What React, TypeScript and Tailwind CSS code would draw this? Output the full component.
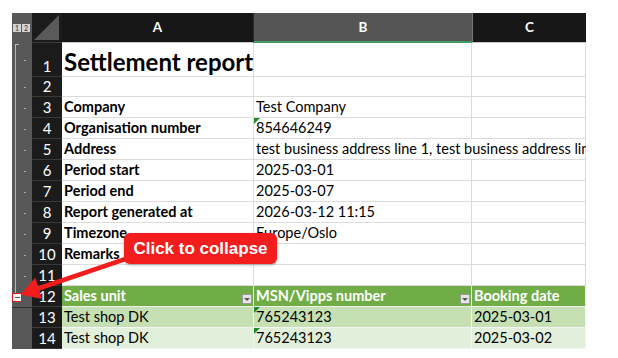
import React from "react";

type Row = {
  n: number;
  h: number;
  a?: string;
  b?: string;
  c?: string;
  kind?: "title" | "label" | "thead" | "odd" | "even" | "empty";
  tri?: boolean;
  overflow?: boolean;
};

const rows: Row[] = [
  { n: 1, h: 34, a: "Settlement report", kind: "title" },
  { n: 2, h: 20, kind: "empty" },
  { n: 3, h: 21, a: "Company", b: "Test Company", kind: "label" },
  { n: 4, h: 21, a: "Organisation number", b: "854646249", kind: "label", tri: true },
  {
    n: 5,
    h: 21,
    a: "Address",
    b: "test business address line 1, test business address line 2",
    kind: "label",
    overflow: true,
  },
  { n: 6, h: 21, a: "Period start", b: "2025-03-01", kind: "label" },
  { n: 7, h: 21, a: "Period end", b: "2025-03-07", kind: "label" },
  { n: 8, h: 21, a: "Report generated at", b: "2026-03-12 11:15", kind: "label" },
  { n: 9, h: 21, a: "Timezone", b: "Europe/Oslo", kind: "label" },
  { n: 10, h: 21, a: "Remarks", kind: "label" },
  { n: 11, h: 21, kind: "empty" },
  { n: 12, h: 21, a: "Sales unit", b: "MSN/Vipps number", c: "Booking date", kind: "thead" },
  { n: 13, h: 21, a: "Test shop DK", b: "765243123", c: "2025-03-01", kind: "odd", tri: true },
  { n: 14, h: 21, a: "Test shop DK", b: "765243123", c: "2025-03-02", kind: "even", tri: true },
];

function Tri() {
  return (
    <div className="absolute left-0 top-0 w-0 h-0 border-t-[6px] border-t-[#1f8a2e] border-r-[6px] border-r-transparent" />
  );
}

function Dropdown() {
  return (
    <div className="absolute right-[1px] bottom-[2px] w-[10px] h-[10px] bg-[#e6e6e6] border border-[#9a9a9a] flex items-center justify-center">
      <div className="w-0 h-0 border-l-[3px] border-l-transparent border-r-[3px] border-r-transparent border-t-[3px] border-t-[#555]" />
    </div>
  );
}

function Gutter({ r }: { r: Row }) {
  if (r.n <= 11) {
    return (
      <div className="w-[20px] bg-[#585858] relative shrink-0">
        {r.n === 1 ? (
          <>
            <div className="absolute left-[3px] top-[1px] bottom-0 w-px bg-[#b5b5b5]" />
            <div className="absolute left-[3px] top-[1px] w-[4px] h-px bg-[#b5b5b5]" />
          </>
        ) : (
          <div className="absolute left-[3px] top-0 bottom-0 w-px bg-[#b5b5b5]" />
        )}
        <div className="absolute left-[12px] top-1/2 w-[2px] h-[1px] bg-[#a8a8a8]" />
      </div>
    );
  }
  if (r.n === 12) {
    return (
      <div className="w-[20px] bg-[#585858] relative shrink-0">
        <div className="absolute left-[3px] top-0 h-[7px] w-px bg-[#b5b5b5]" />
        <div className="absolute left-0 top-[7px] w-[10px] h-[9px] bg-white border-[1.5px] border-[#e8141a] flex items-center justify-center">
          <div className="w-[5px] h-[1.5px] bg-[#555]" />
        </div>
      </div>
    );
  }
  return (
    <div
      className={
        "w-[20px] bg-[#575757] relative shrink-0 " +
        (r.n === 13 ? "border-t border-[#2e2e2e]" : "")
      }
    />
  );
}

function DataRow({ r }: { r: Row }) {
  const isTable = r.kind === "thead" || r.kind === "odd" || r.kind === "even";
  const bg =
    r.kind === "thead"
      ? "bg-[#70ad47]"
      : r.kind === "odd"
      ? "bg-[#c6e0b4]"
      : r.kind === "even"
      ? "bg-[#e2efda]"
      : "bg-white";
  const textCls =
    r.kind === "thead"
      ? "text-white font-bold text-[14.5px]"
      : "text-black text-[14.5px]";
  const lineB =
    r.kind === "thead"
      ? "border-b border-[#b9b9b9]"
      : isTable
      ? "border-b border-[#f4f4f4]"
      : "border-b border-[#dcdcdc]";
  const lineR = isTable ? "border-r border-[#f0f0f0]" : "border-r border-[#dcdcdc]";
  return (
    <div className="flex" style={{ height: r.h }}>
      <Gutter r={r} />
      <div className="w-[30px] shrink-0 bg-[#1b1b1b] text-white text-[15px] leading-[18px] flex items-end justify-center pb-[1px] border-b border-[#3a3a3a]">
        {r.n}
      </div>
      {/* A */}
      <div
        className={
          "w-[192px] shrink-0 relative flex items-end px-[2px] whitespace-nowrap " +
          bg +
          " " +
          lineB +
          " " +
          lineR
        }
      >
        {r.kind === "title" ? (
          <span className="text-[24px] leading-[28px] font-bold text-black">{r.a}</span>
        ) : r.a ? (
          <span
            className={
              "leading-[18px] pb-[1px] " +
              (r.kind === "label" ? "font-bold text-black text-[14.5px]" : textCls)
            }
          >
            {r.a}
          </span>
        ) : null}
        {r.kind === "thead" && <Dropdown />}
      </div>
      {/* B */}
      <div
        className={
          "w-[218px] shrink-0 relative flex items-end px-[2px] whitespace-nowrap " +
          bg +
          " " +
          lineB +
          " " +
          (r.overflow ? "z-10" : lineR)
        }
      >
        {r.tri && <Tri />}
        {r.b ? (
          <span className={"leading-[18px] pb-[1px] " + textCls}>{r.b}</span>
        ) : null}
        {r.kind === "thead" && <Dropdown />}
      </div>
      {/* C */}
      <div
        className={
          "w-[114px] shrink-0 relative flex items-end px-[2px] whitespace-nowrap " +
          (r.overflow ? "" : bg) +
          " " +
          lineB +
          " " +
          lineR
        }
      >
        {r.c ? (
          <span className={"leading-[18px] pb-[1px] " + textCls}>{r.c}</span>
        ) : null}
      </div>
    </div>
  );
}

export default function App() {
  return (
    <div
      className="w-[618px] h-[358px] bg-white relative overflow-hidden"
      style={{ fontFamily: "Lato, 'Open Sans', sans-serif" }}
    >
      <div className="pl-[12px] pt-[13px]">
        <div className="w-[574px] flex flex-col overflow-hidden">
          {/* Column headers */}
          <div className="flex h-[30px]">
            <div className="w-[20px] shrink-0 bg-[#585858] relative">
              <div className="absolute left-[1px] top-[11px] flex gap-px">
                <div className="w-[8px] h-[8px] bg-[#d4d4d4] text-[7px] leading-[8px] text-[#333] text-center">1</div>
                <div className="w-[8px] h-[8px] bg-[#d4d4d4] text-[7px] leading-[8px] text-[#333] text-center">2</div>
              </div>
            </div>
            <div className="w-[30px] shrink-0 bg-[#1b1b1b] relative border-b border-[#3a3a3a]">
              <svg width="30" height="30" className="absolute inset-0">
                <polygon points="27,2 27,27 2,27" fill="#5a5a5a" />
              </svg>
            </div>
            <div className="w-[192px] shrink-0 bg-[#171717] text-white text-[13.5px] font-bold flex items-center justify-center border-b border-[#c8c8c8] border-r border-r-[#2a2a2a]">
              A
            </div>
            <div className="w-[218px] shrink-0 bg-[#555555] text-white text-[13.5px] font-bold flex items-center justify-center border-b-2 border-[#3f9d63]">
              B
            </div>
            <div className="w-[114px] shrink-0 bg-[#171717] text-white text-[13.5px] font-bold flex items-center justify-center border-b border-[#c8c8c8] border-l border-l-[#777]">
              C
            </div>
          </div>
          {rows.map((r) => (
            <DataRow key={r.n} r={r} />
          ))}
        </div>
      </div>

      {/* Arrow */}
      <svg className="absolute left-0 top-0" width="618" height="358">
        <line x1="34" y1="290" x2="140" y2="254" stroke="#f31d1d" strokeWidth="4.5" strokeLinecap="round" />
        <polygon points="22,294 35,279 41,298" fill="#f31d1d" strokeLinejoin="round" stroke="#f31d1d" strokeWidth="1.5" />
      </svg>

      {/* Callout */}
      <div
        className="absolute left-[124px] top-[233px] w-[153px] h-[31px] rounded-[6px] bg-[#f31d1d] flex items-center justify-center text-white text-[17px] font-bold shadow-[0_1px_3px_rgba(0,0,0,0.3)]"
        style={{ fontFamily: "'Liberation Sans', Arial, sans-serif" }}
      >
        Click to collapse
      </div>
    </div>
  );
}
